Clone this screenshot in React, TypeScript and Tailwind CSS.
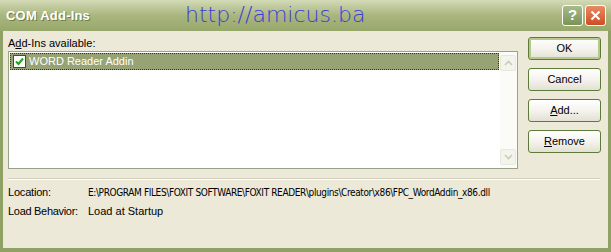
import React from 'react';

const font = { fontFamily: 'Tahoma, "Liberation Sans", "DejaVu Sans", sans-serif' };

const XpButton: React.FC<{ label: React.ReactNode; focused?: boolean }> = ({ label, focused }) => (
  <button
    className={`w-[73px] h-[23px] rounded-[3px] border text-[11px] text-black flex items-center justify-center bg-gradient-to-b from-white via-[#f4f3ee] to-[#e3e1d3] ${
      focused ? 'border-[#5e7a3a] ring-2 ring-inset ring-[#b5c98a]' : 'border-[#5e7a3a]'
    }`}
  >
    {label}
  </button>
);

const ScrollArrow: React.FC<{ up?: boolean }> = ({ up }) => (
  <div className="w-[16px] h-[16px] rounded-[2px] border border-[#e6e8dc] bg-[#f3f4ec] flex items-center justify-center">
    <svg width="9" height="6" viewBox="0 0 9 6">
      <path d={up ? 'M1 5 L4.5 1.5 L8 5' : 'M1 1 L4.5 4.5 L8 1'} fill="none" stroke="#c9cdb8" strokeWidth="1.6" />
    </svg>
  </div>
);

export default function App() {
  return (
    <div className="w-[611px] h-[252px] flex flex-col bg-[#8fa165] overflow-hidden" style={font}>
      {/* Title bar */}
      <div className="h-[31px] flex items-center pl-[6px] pr-[5px] bg-gradient-to-b from-[#d3dab6] via-[#a9b67e] to-[#98a86c] relative">
        <span className="text-white font-bold text-[13px] tracking-[0.2px] [text-shadow:1px_1px_0_#6d7d48]">COM Add-Ins</span>
        <span
          className="absolute left-[185px] top-[2px] text-[22px] text-[#3c3cd8] leading-[26px]"
          style={{ fontFamily: '"DejaVu Sans", Lato, sans-serif', fontWeight: 300 }}
        >
          http://amicus.ba
        </span>
        <div className="ml-auto flex gap-[2px]">
          <div className="w-[21px] h-[21px] rounded-[3px] border border-white bg-gradient-to-b from-[#a9bb8a] to-[#7b9357] flex items-center justify-center text-white font-bold text-[15px]">
            ?
          </div>
          <div className="w-[21px] h-[21px] rounded-[3px] border border-white bg-gradient-to-b from-[#e88a65] to-[#cc4d24] flex items-center justify-center">
            <svg width="11" height="11" viewBox="0 0 11 11">
              <path d="M1.5 1.5 L9.5 9.5 M9.5 1.5 L1.5 9.5" stroke="white" strokeWidth="2" />
            </svg>
          </div>
        </div>
      </div>

      {/* Body */}
      <div className="flex-1 mx-[3px] mb-[4px] bg-[#ece9d8] flex flex-col px-[5px] pt-[6px]">
        <div className="flex gap-[10px]">
          <div className="w-[510px] flex flex-col">
            <div className="text-[11px] h-[14px] leading-[13px] text-black">
              A<u>d</u>d-Ins available:
            </div>
            <div className="h-[118px] border border-[#9aa28a] bg-white flex">
              <div className="flex-1 p-[1px]">
                <div className="h-[17px] bg-[#97a374] flex items-center pl-[2px] border border-dotted border-[#333]">
                  <div className="w-[13px] h-[13px] border border-[#1c5180] bg-white flex items-center justify-center">
                    <svg width="9" height="9" viewBox="0 0 9 9">
                      <path d="M1 4.5 L3.5 7 L8 1.5" fill="none" stroke="#21a121" strokeWidth="2" />
                    </svg>
                  </div>
                  <span className="ml-[3px] text-white text-[11px]">WORD Reader Addin</span>
                </div>
              </div>
              <div className="w-[17px] flex flex-col justify-between py-[3px] pr-[1px] bg-[#fbfbf8]">
                <ScrollArrow up />
                <ScrollArrow />
              </div>
            </div>
          </div>
          <div className="flex flex-col gap-[8px]">
            <XpButton label="OK" focused />
            <XpButton label="Cancel" />
            <XpButton label={<><u>A</u>dd...</>} />
            <XpButton label={<><u>R</u>emove</>} />
          </div>
        </div>

        <div className="mt-[9px] h-[2px] border-t border-[#d0cdbd] border-b border-b-white mr-[3px]" />

        <div className="mt-[4px] flex flex-col gap-[3px] text-[11px] text-black">
          <div className="flex items-center h-[16px]">
            <span className="w-[80px] tracking-[-0.2px]">Location:</span>
            <span
              className="text-[10px] tracking-[-0.38px]"
              style={{ fontFamily: '"DejaVu Sans Condensed", "Liberation Sans", sans-serif' }}
            >
              E:\PROGRAM FILES\FOXIT SOFTWARE\FOXIT READER\plugins\Creator\x86\FPC_WordAddin_x86.dll
            </span>
          </div>
          <div className="flex items-center h-[16px]">
            <span className="w-[80px] tracking-[-0.3px]">Load Behavior:</span>
            <span>Load at Startup</span>
          </div>
        </div>
      </div>
    </div>
  );
}
